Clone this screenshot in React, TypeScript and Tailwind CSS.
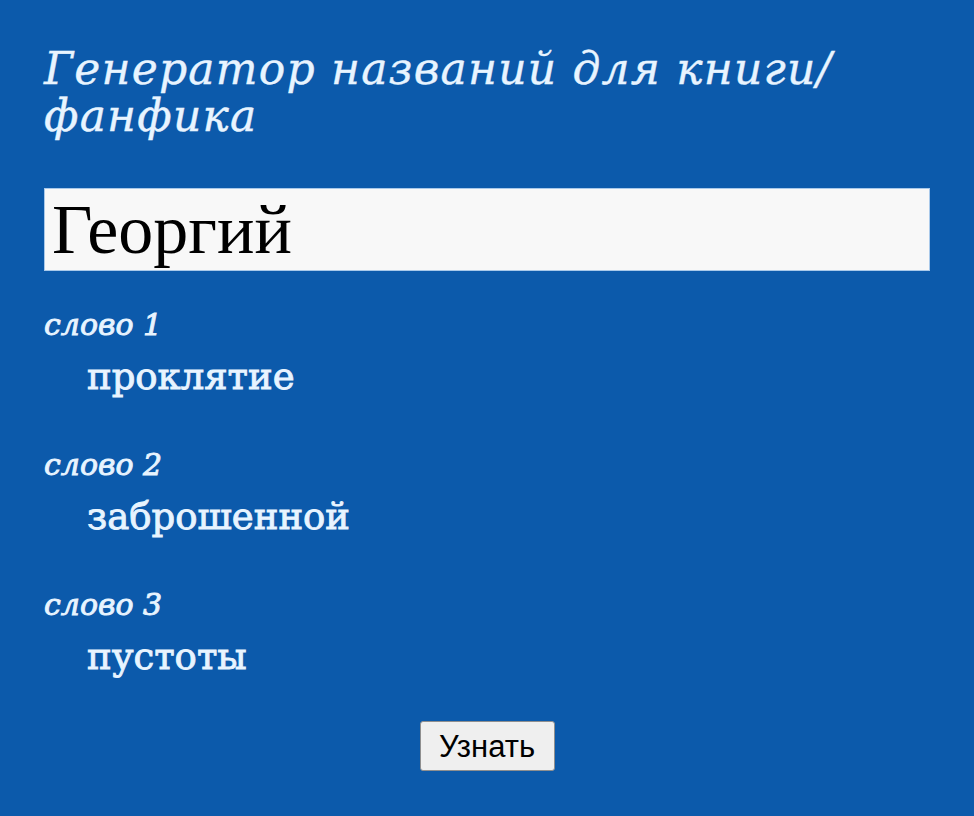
import React from "react";

export default function App() {
  const items = [
    { label: "слово 1", word: "проклятие" },
    { label: "слово 2", word: "заброшенной" },
    { label: "слово 3", word: "пустоты" },
  ];
  return (
    <div className="min-h-screen w-full bg-[#0c5aab] px-[44px] pt-[45px] pb-[40px]">
      <h1 className="font-['DejaVu_Serif',serif] italic font-normal text-[44px] leading-[47px] tracking-[1.2px] text-[#e8f4ff] [-webkit-text-stroke:0.4px_#e8f4ff]">
        Генератор названий для книги/
        <br />
        фанфика
      </h1>
      <div className="mt-[49px] h-[83px] w-full border border-[#a9c9ea] bg-[#f8f8f8] pl-[7px] font-['Liberation_Serif',serif] text-[70px] leading-[81px] text-black">
        Георгий
      </div>
      <div className="mt-[36px] flex flex-col">
        {items.map((it, i) => (
          <div key={i} className={i === 0 ? "" : "mt-[46px]"}>
            <div className="font-['DejaVu_Serif',serif] italic font-normal text-[30px] leading-[36px] text-[#e8f4ff] [-webkit-text-stroke:0.9px_#e8f4ff]">
              {it.label}
            </div>
            <div className="mt-[10px] ml-[43px] font-['DejaVu_Serif',serif] text-[37px] leading-[48px] text-[#e8f4ff] [-webkit-text-stroke:0.9px_#e8f4ff]">
              {it.word}
            </div>
          </div>
        ))}
      </div>
      <div className="mt-[40px] flex justify-center">
        <button className="h-[50px] w-[135px] rounded-[3px] border border-[#8f8f8f] bg-[#efefef] font-['Liberation_Sans',sans-serif] text-[31px] leading-none text-black">
          Узнать
        </button>
      </div>
    </div>
  );
}
